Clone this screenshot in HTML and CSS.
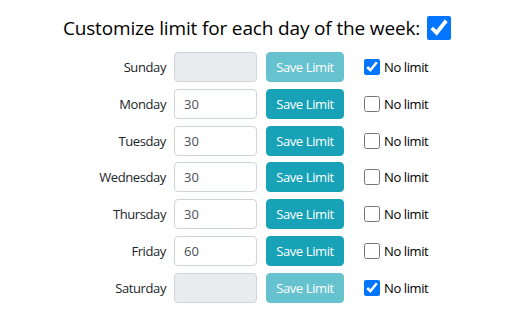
FILE: index.html
```html
<!DOCTYPE html>
<html>
<head>
<meta charset="utf-8">
<link rel="stylesheet" href="styles.css">
</head>
<body>
<div class="page">
  <h1 class="title"><span>Customize limit for each day of the week:</span><input type="checkbox" class="title-check" checked></h1>
  <div class="days">
    <div class="day"><label class="day-name">Sunday</label><input class="limit" type="text" disabled><button class="save" disabled>Save Limit</button><label class="nolimit"><input type="checkbox" checked>No limit</label></div>
    <div class="day"><label class="day-name">Monday</label><input class="limit" type="text" value="30"><button class="save">Save Limit</button><label class="nolimit"><input type="checkbox">No limit</label></div>
    <div class="day"><label class="day-name">Tuesday</label><input class="limit" type="text" value="30"><button class="save">Save Limit</button><label class="nolimit"><input type="checkbox">No limit</label></div>
    <div class="day"><label class="day-name">Wednesday</label><input class="limit" type="text" value="30"><button class="save">Save Limit</button><label class="nolimit"><input type="checkbox">No limit</label></div>
    <div class="day"><label class="day-name">Thursday</label><input class="limit" type="text" value="30"><button class="save">Save Limit</button><label class="nolimit"><input type="checkbox">No limit</label></div>
    <div class="day"><label class="day-name">Friday</label><input class="limit" type="text" value="60"><button class="save">Save Limit</button><label class="nolimit"><input type="checkbox">No limit</label></div>
    <div class="day"><label class="day-name">Saturday</label><input class="limit" type="text" disabled><button class="save" disabled>Save Limit</button><label class="nolimit"><input type="checkbox" checked>No limit</label></div>
  </div>
</div>
</body>
</html>
```

FILE: styles.css
```css
html, body {
  margin: 0;
  padding: 0;
  background: #fff;
}
body {
  font-family: "Open Sans", "Noto Sans", sans-serif;
  color: #212529;
}
.page {
  width: 512px;
  padding-top: 13px;
}
.title {
  margin: 0 0 9px 0;
  font-size: 19px;
  font-weight: 400;
  letter-spacing: -0.15px;
  color: #000;
  display: flex;
  justify-content: center;
  align-items: center;
  gap: 7px;
  height: 30px;
  padding-left: 2px;
}
.title-check {
  width: 24px;
  height: 24px;
  margin: 0;
}
.days {
  display: flex;
  flex-direction: column;
  gap: 6.8px;
}
.day {
  display: flex;
  align-items: center;
  height: 30px;
  font-size: 13px;
  letter-spacing: -0.4px;
}
.day-name {
  width: 166px;
  text-align: right;
  box-sizing: border-box;
}
.limit {
  margin-left: 8px;
  width: 83px;
  height: 30px;
  box-sizing: border-box;
  border: 1px solid #ced4da;
  border-radius: 4px;
  padding: 0 9px;
  font-family: inherit;
  font-size: 13px;
  color: #495057;
  background: #fff;
  outline: none;
}
.limit:disabled {
  background: #e9ecef;
}
.save {
  margin-left: 9px;
  width: 78px;
  height: 30px;
  box-sizing: border-box;
  border: 1px solid #17a2b8;
  border-radius: 4px;
  background: #17a2b8;
  color: #fff;
  font-family: inherit;
  font-size: 13px;
  letter-spacing: -0.4px;
  padding: 0;
}
.save:disabled {
  opacity: 0.65;
}
.nolimit {
  margin-left: 20px;
  display: flex;
  align-items: center;
  gap: 4px;
  color: #000;
}
.nolimit input {
  width: 16px;
  height: 16px;
  margin: 0;
}
```
